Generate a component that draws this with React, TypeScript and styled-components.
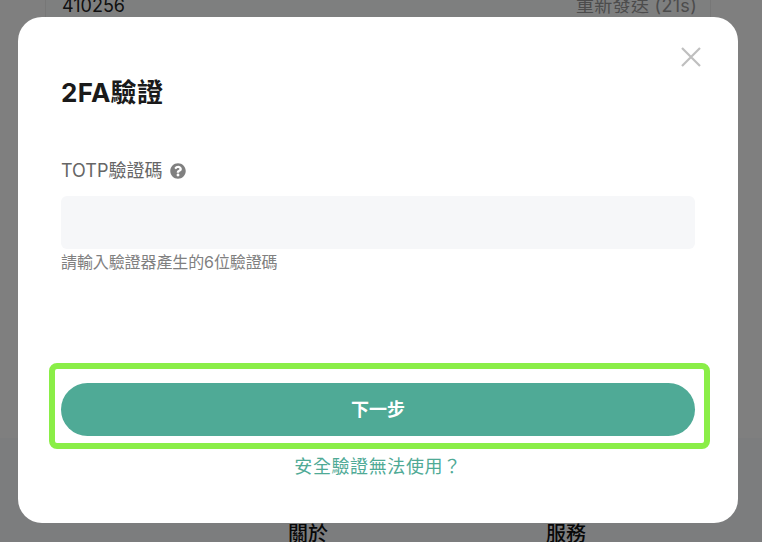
import styled, { createGlobalStyle } from 'styled-components';
import { FaQuestionCircle } from 'react-icons/fa';

const GlobalStyle = createGlobalStyle`
  html, body {
    margin: 0;
    padding: 0;
    background: #fff;
  }
  * {
    box-sizing: border-box;
  }
  body {
    font-family: Inter, "Noto Sans CJK TC", sans-serif;
  }
`;

const Page = styled.div`
  position: relative;
  width: 762px;
  height: 542px;
  overflow: hidden;
  display: flex;
  flex-direction: column;
`;

const Content = styled.main`
  height: 438px;
  flex-shrink: 0;
  background: #fff;
`;

const CodeCard = styled.div`
  margin: -7px 51px 0 45px;
  height: 445px;
  padding: 0 13px 0 16px;
  background: #fdfeff;
  border-left: 1px solid #eeeeee;
  border-right: 1px solid #eeeeee;
`;

const CodeRow = styled.div`
  display: flex;
  justify-content: space-between;
  font-size: 18px;
  line-height: 26px;
`;

const CodeValue = styled.span`
  color: #222;
`;

const Resend = styled.span`
  color: #999;
  letter-spacing: 0.3px;
`;

const Footer = styled.footer`
  flex: 1;
  display: flex;
  padding: 83px 0 0 288px;
  background: #f8fafd;
`;

const FooterTitle = styled.div`
  flex: 0 0 258px;
  font-size: 20px;
  font-weight: 500;
  line-height: 26px;
  color: #111;
`;

const Overlay = styled.div`
  position: absolute;
  inset: 0;
  background: rgba(0, 0, 0, 0.5);
`;

const Modal = styled.div`
  position: absolute;
  left: 18px;
  top: 17px;
  width: 720px;
  height: 506px;
  padding: 57px 43px 0;
  background: #fff;
  border-radius: 24px;
  display: flex;
  flex-direction: column;
`;

const CloseButton = styled.button`
  position: absolute;
  top: 30px;
  right: 37px;
  width: 20px;
  height: 20px;
  padding: 0;
  border: 0;
  background: none;
  color: #bfbfbf;
  display: flex;
`;

const Title = styled.h2`
  margin: 0;
  font-size: 26px;
  font-weight: 700;
  line-height: 38px;
  letter-spacing: 0.3px;
  color: #1a1a1a;
`;

const Label = styled.label`
  margin-top: 46px;
  display: flex;
  align-items: center;
  gap: 8px;
  font-size: 18px;
  line-height: 26px;
  color: #666;
`;

const HelpIcon = styled(FaQuestionCircle)`
  width: 16px;
  height: 16px;
  color: #808080;
`;

const CodeInput = styled.input`
  margin-top: 12px;
  width: 100%;
  height: 53px;
  border: 0;
  border-radius: 6px;
  background: #f6f7f9;
  outline: none;
`;

const Hint = styled.div`
  margin-top: 2px;
  font-size: 16px;
  line-height: 23px;
  letter-spacing: -0.1px;
  color: #808080;
`;

const ButtonWrap = styled.div`
  position: relative;
  margin-top: 109px;
`;

const NextButton = styled.button`
  display: block;
  width: 100%;
  height: 53px;
  padding: 0 0 3px;
  border: 0;
  border-radius: 27px;
  background: #4faa96;
  color: #fff;
  font-family: inherit;
  font-size: 18px;
  font-weight: 600;
`;

const Highlight = styled.div`
  position: absolute;
  inset: -20px -15px -13px -12px;
  border: 6px solid #8aee47;
  border-radius: 8px;
  pointer-events: none;
`;

const HelpLink = styled.a`
  margin-top: 18px;
  text-align: center;
  font-size: 18px;
  line-height: 26px;
  letter-spacing: 0.6px;
  color: #4faa96;
`;

export default function App() {
  return (
    <Page>
      <GlobalStyle />
      <Content>
        <CodeCard>
          <CodeRow>
            <CodeValue>410256</CodeValue>
            <Resend>重新發送 (21s)</Resend>
          </CodeRow>
        </CodeCard>
      </Content>
      <Footer>
        <FooterTitle>關於</FooterTitle>
        <FooterTitle>服務</FooterTitle>
      </Footer>
      <Overlay />
      <Modal>
        <CloseButton aria-label="close">
          <svg width="20" height="20" viewBox="0 0 20 20" fill="none" stroke="currentColor" strokeWidth="2.2">
            <path d="M1 1L19 19M19 1L1 19" />
          </svg>
        </CloseButton>
        <Title>2FA驗證</Title>
        <Label>
          TOTP驗證碼
          <HelpIcon />
        </Label>
        <CodeInput />
        <Hint>請輸入驗證器產生的6位驗證碼</Hint>
        <ButtonWrap>
          <NextButton>下一步</NextButton>
          <Highlight />
        </ButtonWrap>
        <HelpLink>安全驗證無法使用？</HelpLink>
      </Modal>
    </Page>
  );
}
